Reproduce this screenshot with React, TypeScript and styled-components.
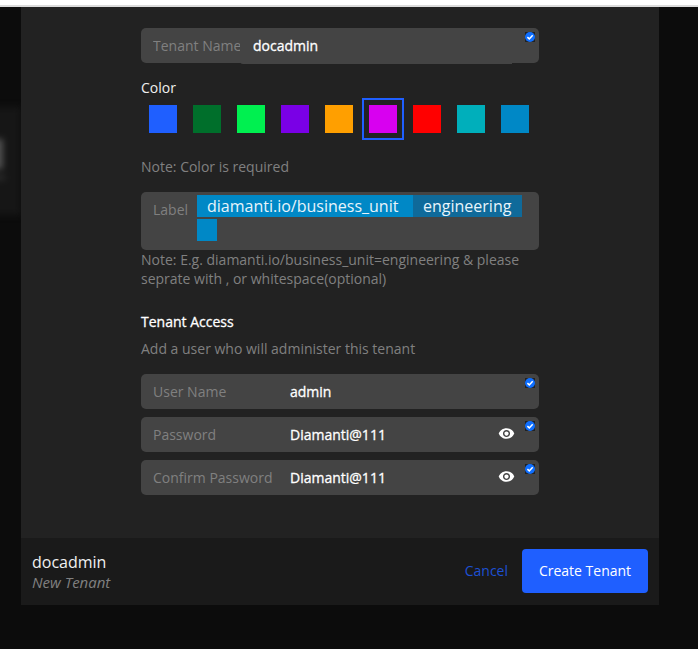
import React from 'react';
import styled, { createGlobalStyle } from 'styled-components';
import { MdVisibility } from 'react-icons/md';

const GlobalStyle = createGlobalStyle`
  html, body {
    margin: 0;
    padding: 0;
    background: #0c0c0c;
  }
  body {
    font-family: "Open Sans", "Noto Sans", sans-serif;
  }
`;

const SWATCHES = [
  '#1f5fff',
  '#006f2b',
  '#00f050',
  '#7a00e6',
  '#ff9f00',
  '#d800f0',
  '#ff0000',
  '#00afbb',
  '#0088c6',
];

const ValidBadge = () => (
  <Badge>
    <svg width="10" height="10" viewBox="0 0 10 10">
      <circle cx="5" cy="5" r="5" fill="#0f6fff" />
      <path d="M2.4 5.1l1.9 1.8 3.4-3.6" fill="none" stroke="#fff" strokeWidth="1.5" />
    </svg>
  </Badge>
);

const App: React.FC = () => {
  return (
    <Page>
      <GlobalStyle />
      <TopStrip />
      <Backdrop>
        <GhostPanel>
          <GhostGlyph />
          <GhostCaption />
        </GhostPanel>
        <Modal>
          <Body>
            <Form>
              <Field>
                <FieldLabel $width={87}>Tenant Name</FieldLabel>
                <NameValue>docadmin</NameValue>
                <ValidBadge />
              </Field>

              <SectionTitle>Color</SectionTitle>
              <Swatches>
                {SWATCHES.map((color, idx) => (
                  <SwatchFrame key={color} $selected={idx === 5}>
                    <Swatch $color={color} />
                  </SwatchFrame>
                ))}
              </Swatches>
              <ColorNote>Note: Color is required</ColorNote>

              <LabelField>
                <LabelCaption>Label</LabelCaption>
                <Tags>
                  <KeyTag>diamanti.io/business_unit</KeyTag>
                  <ValueTag>engineering</ValueTag>
                  <EmptyTag />
                </Tags>
              </LabelField>
              <LabelNote>
                Note: E.g. diamanti.io/business_unit=engineering &amp; please
                seprate with , or whitespace(optional)
              </LabelNote>

              <AccessTitle>Tenant Access</AccessTitle>
              <AccessNote>Add a user who will administer this tenant</AccessNote>

              <AccessFields>
                <Field>
                  <FieldLabel $width={137}>User Name</FieldLabel>
                  <FieldValue>admin</FieldValue>
                  <ValidBadge />
                </Field>
                <Field>
                  <FieldLabel $width={137}>Password</FieldLabel>
                  <FieldValue>Diamanti@111</FieldValue>
                  <EyeIcon size={17} />
                  <ValidBadge />
                </Field>
                <Field>
                  <FieldLabel $width={137}>Confirm Password</FieldLabel>
                  <FieldValue>Diamanti@111</FieldValue>
                  <EyeIcon size={17} />
                  <ValidBadge />
                </Field>
              </AccessFields>
            </Form>
          </Body>
          <Footer>
            <FooterInfo>
              <FooterName>docadmin</FooterName>
              <FooterSub>New Tenant</FooterSub>
            </FooterInfo>
            <FooterActions>
              <CancelLink>Cancel</CancelLink>
              <SubmitButton>Create Tenant</SubmitButton>
            </FooterActions>
          </Footer>
        </Modal>
      </Backdrop>
    </Page>
  );
};

const Page = styled.div`
  width: 698px;
  height: 649px;
  overflow: hidden;
  display: flex;
  flex-direction: column;
`;

const TopStrip = styled.div`
  height: 5px;
  flex-shrink: 0;
  background: #fff;
  border-bottom: 2px solid #dcdcdc;
`;

const Backdrop = styled.div`
  position: relative;
  flex: 1;
  padding-left: 21px;
  overflow: hidden;
  background: #0c0c0c;
`;

const GhostPanel = styled.div`
  position: absolute;
  left: -10px;
  top: 100px;
  width: 31px;
  height: 108px;
  background: #161616;
  filter: blur(3px);
`;

const GhostGlyph = styled.div`
  position: absolute;
  left: 0;
  top: 32px;
  width: 13px;
  height: 30px;
  background: #505050;
`;

const GhostCaption = styled.div`
  position: absolute;
  left: 0;
  top: 68px;
  width: 15px;
  height: 5px;
  background: #2c2c2c;
`;

const Modal = styled.div`
  position: relative;
  width: 638px;
  display: flex;
  flex-direction: column;
`;

const Body = styled.div`
  height: 531px;
  background: #222222;
  padding: 21px 0 0 120px;
  box-sizing: border-box;
`;

const Form = styled.div`
  width: 398px;
  display: flex;
  flex-direction: column;
`;

const Field = styled.div`
  position: relative;
  display: flex;
  align-items: center;
  height: 35px;
  padding-left: 12px;
  border-radius: 5px;
  background: #444444;
`;

const FieldLabel = styled.span<{ $width: number }>`
  width: ${p => p.$width}px;
  flex-shrink: 0;
  font-size: 14px;
  color: #808080;
  white-space: nowrap;
  overflow: hidden;
`;

const NameValue = styled.span`
  align-self: flex-start;
  width: 272px;
  height: 36px;
  padding-left: 13px;
  box-sizing: border-box;
  border-radius: 0 0 0 3px;
  font-size: 14px;
  font-weight: 500;
  -webkit-text-stroke: 0.3px #fff;
  line-height: 35px;
  color: #fff;
  background: #444444;
`;

const FieldValue = styled.span`
  flex: 1;
  font-size: 14px;
  font-weight: 500;
  -webkit-text-stroke: 0.3px #fff;
  color: #fff;
`;

const Badge = styled.span`
  position: absolute;
  top: 4px;
  right: 4px;
  width: 10px;
  height: 10px;
  display: flex;
  background: #222222;
`;

const EyeIcon = styled(MdVisibility)`
  margin: 0 24px 3px 0;
  color: #fff;
`;

const SectionTitle = styled.div`
  margin-top: 15px;
  font-size: 14px;
  line-height: 20px;
  color: #f0f0f0;
`;

const Swatches = styled.div`
  display: flex;
  margin-left: 1px;
  gap: 2px;
`;

const SwatchFrame = styled.div<{ $selected: boolean }>`
  width: 42px;
  height: 42px;
  box-sizing: border-box;
  display: flex;
  align-items: center;
  justify-content: center;
  border: 2px solid ${p => (p.$selected ? '#1f5fff' : 'transparent')};
`;

const Swatch = styled.div<{ $color: string }>`
  width: 28px;
  height: 28px;
  background: ${p => p.$color};
`;

const ColorNote = styled.div`
  margin-top: 17px;
  font-size: 14px;
  line-height: 20px;
  color: #808080;
`;

const LabelField = styled.div`
  display: flex;
  margin-top: 15px;
  height: 58px;
  padding: 3px 0 0 12px;
  box-sizing: border-box;
  border-radius: 5px;
  background: #444444;
`;

const LabelCaption = styled.span`
  width: 44px;
  flex-shrink: 0;
  padding-top: 5px;
  font-size: 14px;
  line-height: 20px;
  color: #808080;
`;

const Tags = styled.div`
  width: 326px;
  display: flex;
  flex-wrap: wrap;
  align-content: flex-start;
  row-gap: 2px;
`;

const KeyTag = styled.span`
  height: 22px;
  width: 216px;
  padding-left: 10px;
  box-sizing: border-box;
  font-size: 16px;
  line-height: 22px;
  color: #e8f4fb;
  background: #0088c6;
`;

const ValueTag = styled.span`
  height: 22px;
  width: 109px;
  padding-left: 10px;
  box-sizing: border-box;
  font-size: 16px;
  line-height: 22px;
  color: #e8f4fb;
  background: #0f6a9a;
`;

const EmptyTag = styled.span`
  width: 20px;
  height: 22px;
  background: #0088c6;
`;

const LabelNote = styled.div`
  font-size: 14px;
  line-height: 19px;
  color: #808080;
`;

const AccessTitle = styled.div`
  margin-top: 24px;
  font-size: 14px;
  font-weight: 500;
  -webkit-text-stroke: 0.3px #fff;
  line-height: 20px;
  color: #fff;
`;

const AccessNote = styled.div`
  margin-top: 7px;
  font-size: 14px;
  line-height: 20px;
  color: #808080;
`;

const AccessFields = styled.div`
  margin-top: 15px;
  display: flex;
  flex-direction: column;
  gap: 8px;
`;

const Footer = styled.div`
  height: 67px;
  padding: 0 11px 1px;
  box-sizing: border-box;
  display: flex;
  align-items: center;
  justify-content: space-between;
  background: #1a1a1a;
`;

const FooterInfo = styled.div`
  display: flex;
  flex-direction: column;
`;

const FooterName = styled.div`
  font-size: 16px;
  line-height: 22px;
  color: #f0f0f0;
`;

const FooterSub = styled.div`
  font-size: 15px;
  font-style: italic;
  line-height: 19px;
  color: #808080;
`;

const FooterActions = styled.div`
  display: flex;
  align-items: center;
  gap: 14px;
`;

const CancelLink = styled.a`
  margin-bottom: 2px;
  font-size: 14px;
  color: #1d50d4;
`;

const SubmitButton = styled.button`
  width: 126px;
  height: 44px;
  padding: 0 0 2px;
  border: none;
  border-radius: 4px;
  font-family: inherit;
  font-size: 14px;
  color: #fff;
  background: #1f5fff;
`;

export default App;
